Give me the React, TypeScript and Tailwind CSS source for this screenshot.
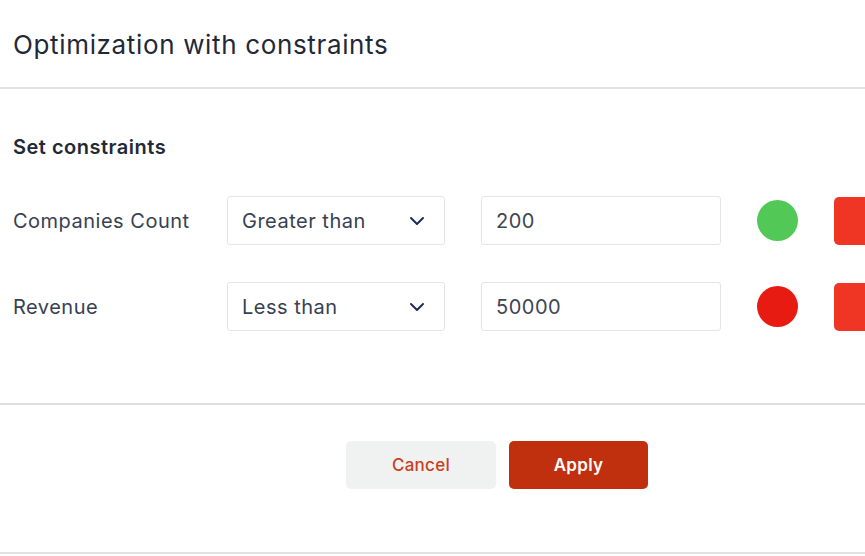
import { ChevronDown } from "lucide-react";

const ROWS = [
  { label: "Companies Count", op: "Greater than", value: "200", dot: "bg-[#52c957]" },
  { label: "Revenue", op: "Less than", value: "50000", dot: "bg-[#e81b12]" },
];

export default function App() {
  return (
    <div className="w-[865px] h-[556px] overflow-hidden bg-white font-['Inter',sans-serif]">
      <div className="w-[994px]">
        {/* Header */}
        <div className="h-[89px] px-[13px] flex items-center border-b-2 border-[#e2e2e2]">
          <h1 className="text-[26px] leading-[32px] text-[#1f2937] tracking-[0.65px] pt-[2px]">Optimization with constraints</h1>
        </div>

        {/* Body */}
        <div className="px-[13px] pt-[46px] pb-[72px] border-b-2 border-[#dedede]">
          <h2 className="text-[20px] leading-[24px] font-semibold text-[#1f2937] tracking-[0.5px]">Set constraints</h2>
          <div className="mt-[37px] flex flex-col gap-[37px]">
            {ROWS.map((row) => (
              <div key={row.label} className="flex items-center">
                <div className="w-[214px] text-[20px] text-[#374151] tracking-[0.5px]">{row.label}</div>
                <div className="w-[218px] h-[49px] border border-[#e3e5e8] rounded-[3px] pl-[14px] pr-[15px] flex items-center justify-between text-[20px] text-[#374151] tracking-[0.5px]">
                  <span>{row.op}</span>
                  <ChevronDown className="w-[24px] h-[24px] text-[#1e2a5a]" strokeWidth={2} />
                </div>
                <div className="ml-[36px] w-[240px] h-[49px] border border-[#e3e5e8] rounded-[3px] pl-[14px] flex items-center text-[20px] text-[#404652] tracking-[0.5px]">
                  {row.value}
                </div>
                <div className={`ml-[36px] w-[41px] h-[41px] rounded-full ${row.dot}`} />
                <div className="ml-[36px] w-[48px] h-[48px] rounded-[5px] bg-[#ef3524]" />
              </div>
            ))}
          </div>
        </div>

        {/* Footer */}
        <div className="pt-[36px] pb-[63px] border-b-2 border-[#e2e2e2] flex justify-center gap-[13px]">
          <button className="w-[150px] h-[48px] pt-[2px] rounded-[5px] bg-[#f0f1f1] text-[#c9401f] text-[17px] font-medium tracking-[0.3px]">
            Cancel
          </button>
          <button className="w-[139px] h-[48px] pt-[2px] rounded-[5px] bg-[#c0300e] text-white text-[17px] font-semibold tracking-[0.3px]">
            Apply
          </button>
        </div>
      </div>
    </div>
  );
}
